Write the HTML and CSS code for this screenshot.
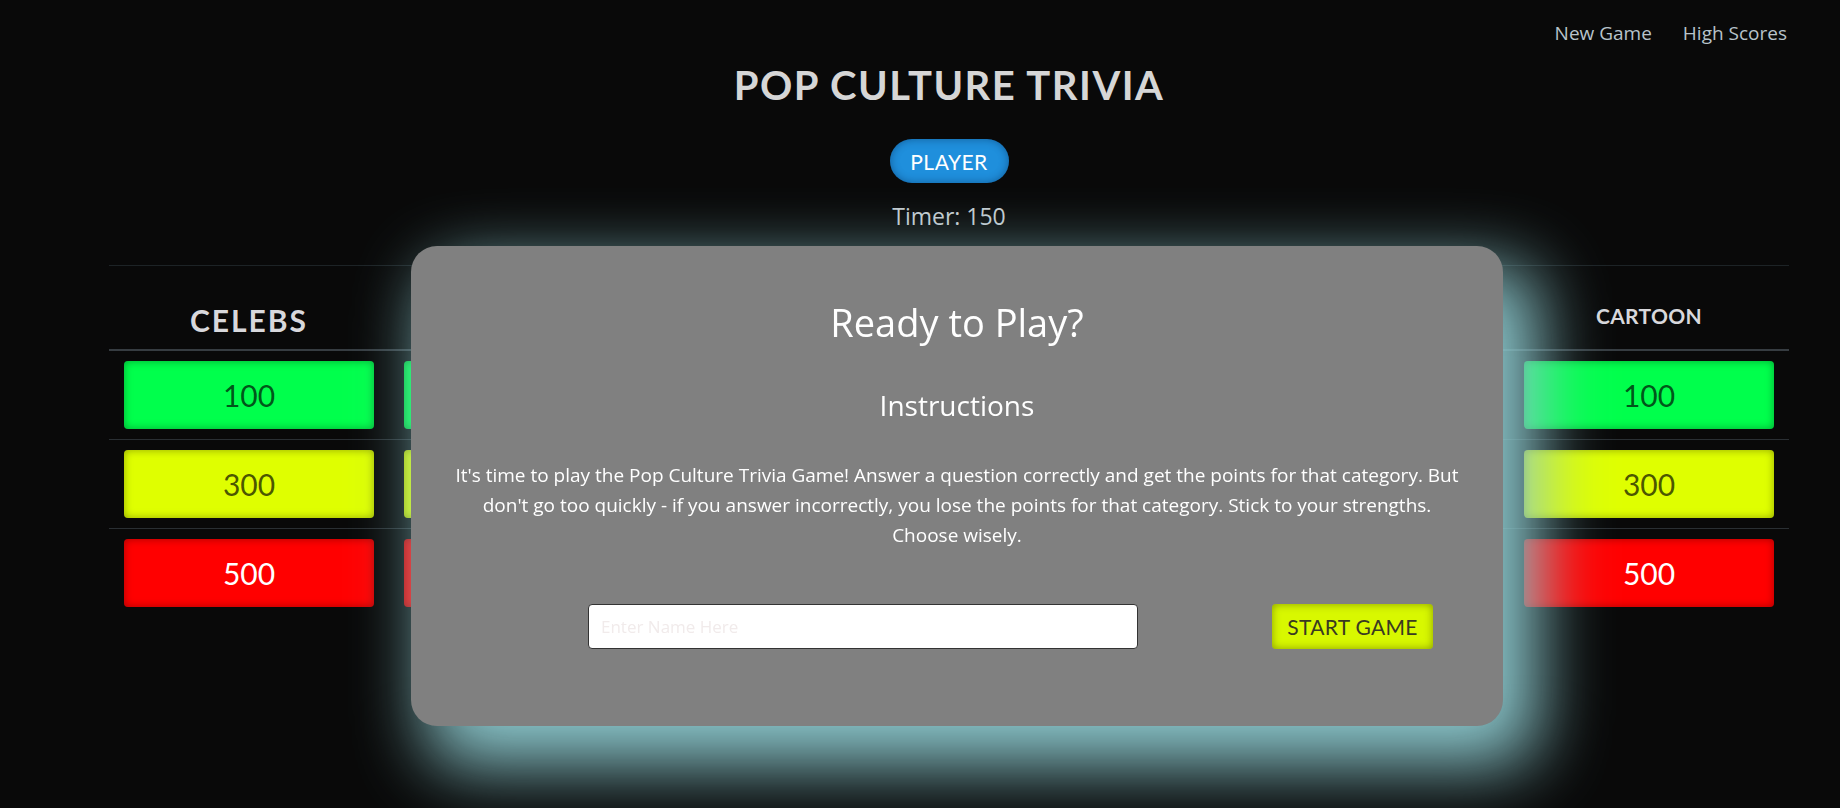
FILE: index.html
```html
<!DOCTYPE html>
<html lang="en">
<head>
<meta charset="utf-8">
<title>Pop Culture Trivia</title>
<link rel="stylesheet" href="styles.css">
</head>
<body>
<div class="page">
  <nav class="topnav">
    <a href="#">New Game</a>
    <a href="#">High Scores</a>
  </nav>
  <header class="hero">
    <h1 class="title">POP CULTURE TRIVIA</h1>
    <button class="player-pill">PLAYER</button>
    <p class="timer">Timer: 150</p>
  </header>
  <section class="board">
    <div class="cat"><span>CELEBS</span></div>
    <div class="cat"><span>MOVIES</span></div>
    <div class="cat"><span>MUSIC</span></div>
    <div class="cat"><span>TV SHOWS</span></div>
    <div class="cat"><span>SPORTS</span></div>
    <div class="cat small"><span>CARTOON</span></div>

    <div class="slot"><button class="tile green">100</button></div>
    <div class="slot"><button class="tile green">100</button></div>
    <div class="slot"><button class="tile green">100</button></div>
    <div class="slot"><button class="tile green">100</button></div>
    <div class="slot"><button class="tile green">100</button></div>
    <div class="slot"><button class="tile green">100</button></div>

    <div class="slot"><button class="tile yellow">300</button></div>
    <div class="slot"><button class="tile yellow">300</button></div>
    <div class="slot"><button class="tile yellow">300</button></div>
    <div class="slot"><button class="tile yellow">300</button></div>
    <div class="slot"><button class="tile yellow">300</button></div>
    <div class="slot"><button class="tile yellow">300</button></div>

    <div class="slot last"><button class="tile red">500</button></div>
    <div class="slot last"><button class="tile red">500</button></div>
    <div class="slot last"><button class="tile red">500</button></div>
    <div class="slot last"><button class="tile red">500</button></div>
    <div class="slot last"><button class="tile red">500</button></div>
    <div class="slot last"><button class="tile red">500</button></div>
  </section>
</div>

<div class="modal">
  <h2 class="modal-title">Ready to Play?</h2>
  <h3 class="modal-sub">Instructions</h3>
  <p class="modal-text">It's time to play the Pop Culture Trivia Game! Answer a question correctly and get the points for that category. But don't go too quickly - if you answer incorrectly, you lose the points for that category. Stick to your strengths. Choose wisely.</p>
  <form class="start-form">
    <input class="name-input" type="text" placeholder="Enter Name Here">
    <button class="start-btn" type="button">START GAME</button>
  </form>
</div>
</body>
</html>
```
FILE: styles.css
```css
html, body {
  margin: 0;
  padding: 0;
}

body {
  background: #090909;
  font-family: "Open Sans", "Noto Sans", sans-serif;
  width: 1840px;
  height: 808px;
  overflow: hidden;
}

.page {
  margin-left: 109px;
  width: 1680px;
}

/* nav */
.topnav {
  display: flex;
  justify-content: flex-end;
  gap: 31px;
  padding: 20px 2px 0 0;
  height: 46px;
  box-sizing: border-box;
}

.topnav a {
  color: #b8c3cb;
  font-size: 19px;
  line-height: 26px;
  text-decoration: none;
}

/* hero */
.hero {
  display: flex;
  flex-direction: column;
  align-items: center;
}

.title {
  margin: 15px 0 0;
  font-family: "Lato", sans-serif;
  font-weight: 700;
  font-size: 40px;
  line-height: 48px;
  letter-spacing: 1.5px;
  color: #d6d6d6;
}

.player-pill {
  margin-top: 30px;
  width: 119px;
  height: 44px;
  border: none;
  border-radius: 22px;
  background: #1f8fdc;
  box-shadow: inset 0 0 8px rgba(0, 30, 70, 0.45);
  color: #ffffff;
  font-family: "Lato", sans-serif;
  font-size: 21px;
  letter-spacing: 0.5px;
  padding: 0;
}

.timer {
  margin: 18px 0 0;
  font-size: 23px;
  line-height: 31px;
  color: #c4cbd0;
}

/* board */
.board {
  margin-top: 33px;
  border-top: 1px solid #1d2326;
  display: grid;
  grid-template-columns: repeat(6, 280px);
}

.cat {
  height: 85px;
  box-sizing: border-box;
  display: flex;
  align-items: flex-end;
  justify-content: center;
  padding-bottom: 11px;
  border-bottom: 2px solid #363c41;
}

.cat span {
  font-family: "Lato", sans-serif;
  font-weight: 700;
  font-size: 30px;
  line-height: 1.2;
  letter-spacing: 2px;
  color: #d8d8dc;
}

.cat.small span {
  font-size: 21px;
  letter-spacing: 0.3px;
  margin-bottom: 10px;
}

.slot {
  padding: 10px 15px;
  border-bottom: 1px solid #2a2f33;
}

.slot.last {
  border-bottom: none;
}

.tile {
  display: block;
  width: 100%;
  height: 68px;
  border: none;
  border-radius: 4px;
  font-family: "Lato", sans-serif;
  font-size: 30px;
  font-weight: 400;
  padding: 0;
  box-shadow: inset 0 0 9px rgba(0, 0, 0, 0.35);
}

.tile.green {
  background: #00ff4c;
  color: rgba(0, 0, 0, 0.68);
}

.tile.yellow {
  background: #dfff00;
  color: rgba(0, 0, 0, 0.68);
}

.tile.red {
  background: #ff0000;
  color: #ffffff;
}

/* modal */
.modal {
  position: fixed;
  left: 411px;
  top: 246px;
  width: 1092px;
  height: 480px;
  box-sizing: border-box;
  padding: 54px 41px 0;
  border-radius: 26px;
  background: #808080;
  box-shadow: 25px 30px 70px 10px rgb(140, 200, 205);
  text-align: center;
  color: #ffffff;
}

.modal-title {
  margin: 0;
  font-weight: 400;
  font-size: 38px;
  line-height: 1.2;
}

.modal-sub {
  margin: 43px 0 0;
  font-weight: 400;
  font-size: 28px;
  line-height: 1.2;
}

.modal-text {
  margin: 38px 0 0;
  font-size: 19px;
  line-height: 30px;
}

.start-form {
  margin-top: 54px;
  display: flex;
  gap: 134px;
  padding-left: 136px;
}

.name-input {
  width: 550px;
  height: 45px;
  box-sizing: border-box;
  border: 1px solid #333333;
  border-radius: 4px;
  padding: 0 12px;
  font-family: "Open Sans", sans-serif;
  font-size: 17px;
  background: #ffffff;
}

.name-input::placeholder {
  color: #f1ebeb;
}

.start-btn {
  width: 161px;
  height: 45px;
  border: none;
  border-radius: 4px;
  background: #d8f800;
  box-shadow: inset 0 0 8px rgba(70, 80, 0, 0.55);
  color: #3a3a22;
  font-family: "Lato", sans-serif;
  font-size: 21px;
  letter-spacing: 0.3px;
  padding: 0;
}
```
